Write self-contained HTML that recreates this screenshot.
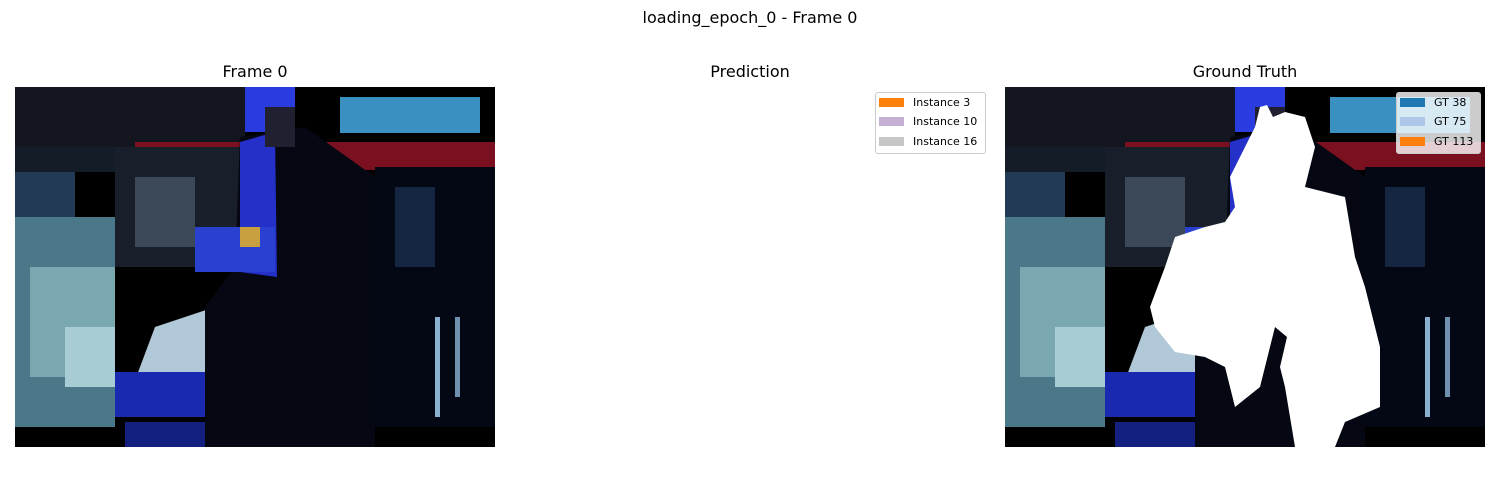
<!DOCTYPE html>
<html><head><style>
body{margin:0;width:1500px;height:500px;background:#fff;position:relative;font-family:"DejaVu Sans","Liberation Sans",sans-serif;overflow:hidden}
.t{position:absolute;font-size:16px;color:#000;white-space:nowrap;transform:translateX(-50%)}
.img{position:absolute;top:87px;width:480px;height:360px}
.leg{position:absolute;top:92px;height:60px;border:1px solid #ccc;border-radius:3px;background:rgba(255,255,255,0.8);font-size:11px}
.row{position:absolute;left:3px;height:14px;line-height:14px;white-space:nowrap}
.row i{display:inline-block;width:25px;height:9px;vertical-align:middle;margin-right:9px;margin-top:-2px}
</style></head><body>
<div class="t" style="left:750px;top:8px">loading_epoch_0 - Frame 0</div>
<div class="t" style="left:255px;top:62px">Frame 0</div>
<div class="t" style="left:750px;top:62px">Prediction</div>
<div class="t" style="left:1245px;top:62px">Ground Truth</div>
<svg width="0" height="0" style="position:absolute">
<defs>
<symbol id="scene" viewBox="0 0 480 360">
<rect width="480" height="360" fill="#000"/>
<rect x="0" y="0" width="230" height="60" fill="#14161f"/>
<rect x="230" y="0" width="50" height="45" fill="#2a3be0"/>
<rect x="325" y="10" width="140" height="36" fill="#3a90c0"/>
<rect x="120" y="55" width="360" height="28" fill="#7a1020"/>
<rect x="0" y="60" width="120" height="25" fill="#141c28"/>
<rect x="0" y="85" width="60" height="60" fill="#223a55"/>
<rect x="0" y="130" width="100" height="210" fill="#4a7888"/>
<rect x="15" y="180" width="85" height="110" fill="#7aa8b0"/>
<rect x="50" y="240" width="50" height="60" fill="#a8ccd4"/>
<rect x="100" y="60" width="130" height="120" fill="#181e2a"/>
<rect x="120" y="90" width="60" height="70" fill="#3a4858"/>
<polygon points="140,240 200,220 240,250 220,310 110,320" fill="#b0c8d8"/>
<rect x="100" y="285" width="100" height="45" fill="#1a2ab0"/>
<rect x="110" y="335" width="90" height="25" fill="#142080"/>
<polygon points="225,50 290,40 360,90 360,360 190,360 190,220 220,180" fill="#050712"/>
<polygon points="225,55 260,45 262,190 225,185" fill="#2430c8"/>
<rect x="180" y="140" width="80" height="45" fill="#2a40d0"/>
<rect x="225" y="140" width="20" height="20" fill="#c8a040"/>
<rect x="250" y="20" width="30" height="40" fill="#202030"/>
<rect x="360" y="80" width="120" height="260" fill="#040814"/>
<rect x="380" y="100" width="40" height="80" fill="#142640"/>
<rect x="420" y="230" width="5" height="100" fill="#8ab0d0"/>
<rect x="440" y="230" width="5" height="80" fill="#7090b0"/>
<rect x="0" y="345" width="110" height="15" fill="#000"/>
</symbol>
</defs></svg>
<svg class="img" style="left:15px" viewBox="0 0 480 360"><use href="#scene"/></svg>
<svg class="img" style="left:1005px" viewBox="0 0 480 360"><use href="#scene"/>
<path d="M255,20 L262,18 268,30 280,25 300,30 310,60 300,100 340,110 350,170 360,200 375,260 375,320 340,335 330,360 290,360 280,300 275,280 282,250 270,240 260,280 255,300 230,320 220,280 200,270 170,265 150,240 145,220 160,180 170,150 200,140 220,135 230,120 225,90 240,60 250,40 Z" fill="#fff"/>
</svg>
<div class="leg" style="left:875px;width:109px">
<div class="row" style="top:3px"><i style="background:#ff7f0e"></i>Instance 3</div>
<div class="row" style="top:22px"><i style="background:#c5b0d5"></i>Instance 10</div>
<div class="row" style="top:42px"><i style="background:#c7c7c7"></i>Instance 16</div>
</div>
<div class="leg" style="left:1396px;width:83px">
<div class="row" style="top:3px"><i style="background:#1f77b4"></i>GT 38</div>
<div class="row" style="top:22px"><i style="background:#aec7e8"></i>GT 75</div>
<div class="row" style="top:42px"><i style="background:#ff7f0e"></i>GT 113</div>
</div>
</body></html>
